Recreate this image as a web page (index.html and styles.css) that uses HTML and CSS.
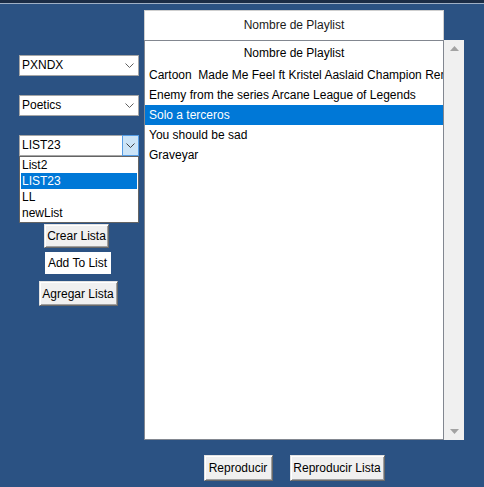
FILE: index.html
```html
<!DOCTYPE html>
<html>
<head>
<meta charset="utf-8">
<link rel="stylesheet" href="styles.css">
</head>
<body>
<div class="topbar"></div>
<div class="main">
  <div class="left">
    <div class="combo"><span class="combo-text">PXNDX</span><span class="combo-btn"><svg width="9" height="5" viewBox="0 0 9 5"><polyline points="0.5,0.5 4.5,4.5 8.5,0.5" fill="none" stroke="#606060" stroke-width="1"/></svg></span></div>
    <div class="combo gap"><span class="combo-text">Poetics</span><span class="combo-btn"><svg width="9" height="5" viewBox="0 0 9 5"><polyline points="0.5,0.5 4.5,4.5 8.5,0.5" fill="none" stroke="#606060" stroke-width="1"/></svg></span></div>
    <div class="combo gap open"><span class="combo-text">LIST23</span><span class="combo-btn active"><svg width="9" height="5" viewBox="0 0 9 5"><polyline points="0.5,0.5 4.5,4.5 8.5,0.5" fill="none" stroke="#404040" stroke-width="1"/></svg></span>
      <ul class="dropdown">
        <li>List2</li>
        <li class="sel">LIST23</li>
        <li>LL</li>
        <li>newList</li>
      </ul>
    </div>
    <button class="btn crear">Crear Lista</button>
    <div class="flat">Add To List</div>
    <button class="btn agregar">Agregar Lista</button>
  </div>
  <div class="right">
    <div class="header">Nombre de Playlist</div>
    <div class="listwrap">
      <div class="list">
        <div class="row head">Nombre de Playlist</div>
        <div class="row">Cartoon  Made Me Feel ft Kristel Aaslaid Champion Remix</div>
        <div class="row">Enemy from the series Arcane League of Legends</div>
        <div class="row sel">Solo a terceros</div>
        <div class="row">You should be sad</div>
        <div class="row">Graveyar</div>
      </div>
      <div class="scrollbar">
        <svg class="arrow" width="9" height="5" viewBox="0 0 9 5"><polygon points="0,5 4.5,0 9,5" fill="#a3a3a3"/></svg>
        <svg class="arrow" width="9" height="5" viewBox="0 0 9 5"><polygon points="0,0 4.5,5 9,0" fill="#a3a3a3"/></svg>
      </div>
    </div>
    <div class="actions">
      <button class="btn play">Reproducir</button>
      <button class="btn playlist">Reproducir Lista</button>
    </div>
  </div>
</div>
</body>
</html>
```
FILE: styles.css
```css
* { box-sizing: border-box; }
html, body {
  margin: 0;
  padding: 0;
  width: 484px;
  height: 487px;
  overflow: hidden;
  background: #2b5283;
  font-family: "Liberation Sans", Arial, sans-serif;
  font-size: 12px;
  color: #000;
}
.topbar {
  height: 4px;
  background: #1b2c45;
  border-bottom: 1px solid #9fb0c6;
}
.main {
  display: flex;
  align-items: flex-start;
}
.left {
  width: 120px;
  margin-left: 19px;
  padding-top: 51px;
  display: flex;
  flex-direction: column;
  align-items: center;
}
.combo {
  position: relative;
  width: 120px;
  height: 21px;
  background: #fff;
  border: 1px solid #a6a6a6;
  display: flex;
  align-items: stretch;
}
.combo.gap { margin-top: 19px; }
.combo-text {
  flex: 1;
  padding-left: 2px;
  line-height: 19px;
}
.combo-btn {
  width: 17px;
  display: flex;
  align-items: center;
  justify-content: center;
}
.combo-btn.active {
  background: #cce4f7;
  border: 1px solid #569de5;
  margin: -1px -1px -1px 0;
  width: 17px;
}
.dropdown {
  position: absolute;
  left: -1px;
  top: 20px;
  width: 120px;
  height: 67px;
  margin: 0;
  padding: 0 1px;
  list-style: none;
  background: #fff;
  border: 1px solid #646464;
  z-index: 2;
}
.dropdown li {
  height: 16px;
  line-height: 16px;
  padding-left: 1px;
}
.dropdown li.sel {
  background: #0078d7;
  color: #fff;
}
.btn {
  font-family: "Liberation Sans", Arial, sans-serif;
  font-size: 12px;
  color: #000;
  background: #f0f0f0;
  border: 1px solid;
  border-color: #e3e3e3 #696969 #696969 #e3e3e3;
  box-shadow: inset 1px 1px #ffffff, inset -1px -1px #a0a0a0;
  padding: 0;
  margin: 0;
}
.crear {
  width: 65px;
  height: 24px;
  margin-top: 68px;
  margin-right: 5px;
}
.flat {
  width: 66px;
  height: 22px;
  margin-top: 4px;
  margin-right: 3px;
  background: #fff;
  line-height: 22px;
  text-align: center;
}
.agregar {
  width: 79px;
  height: 25px;
  margin-top: 7px;
  margin-right: 2px;
}
.right {
  margin-left: 5px;
  margin-top: 6px;
  width: 320px;
}
.header {
  width: 300px;
  height: 30px;
  background: #fff;
  border: 1px solid #cfcfcf;
  border-bottom: none;
  text-align: center;
  line-height: 29px;
  color: #1a1a1a;
}
.listwrap {
  display: flex;
  height: 400px;
}
.list {
  width: 300px;
  height: 400px;
  background: #fff;
  border: 1px solid #828790;
  padding-top: 1px;
  overflow: hidden;
}
.row {
  height: 20px;
  line-height: 20px;
  padding-left: 4px;
  white-space: pre;
  overflow: hidden;
}
.row.head {
  height: 23px;
  line-height: 22px;
  text-align: center;
  padding-left: 0;
}
.row.sel {
  background: #0078d7;
  color: #fff;
}
.scrollbar {
  width: 20px;
  height: 400px;
  background: #f0f0f0;
  display: flex;
  flex-direction: column;
  justify-content: space-between;
  align-items: center;
  padding: 6px 0 6px;
}
.actions {
  width: 300px;
  display: flex;
  justify-content: center;
  gap: 17px;
  margin-top: 15px;
}
.play {
  width: 69px;
  height: 26px;
}
.playlist {
  width: 95px;
  height: 26px;
}
```
